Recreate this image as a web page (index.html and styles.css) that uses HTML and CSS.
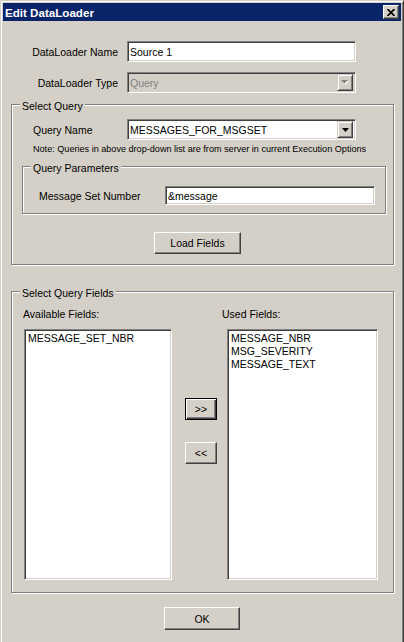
FILE: index.html
```html
<!DOCTYPE html>
<html lang="en">
<head>
    <meta charset="UTF-8">
    <meta name="viewport" content="width=device-width, initial-scale=1.0">
    <title>Edit DataLoader</title>
    <link rel="stylesheet" href="styles.css">
</head>
<body>
    <div class="window">
        <div class="titlebar">
            <span class="title">Edit DataLoader</span>
            <button class="close" title="Close">
                <svg width="8" height="7" viewBox="0 0 8 7">
                    <path d="M0.5 0 L7.5 7 M7.5 0 L0.5 7" stroke="#000" stroke-width="1.7" fill="none"/>
                </svg>
            </button>
        </div>

        <div class="content">
            <div class="row top-row">
                <label class="top-label" for="loaderName">DataLoader Name</label>
                <input type="text" class="field wide" id="loaderName" value="Source 1">
            </div>
            <div class="row top-row second">
                <label class="top-label">DataLoader Type</label>
                <div class="combo wide disabled">
                    <span>Query</span>
                    <span class="drop">
                        <svg width="8" height="5" viewBox="0 0 8 5">
                            <polygon points="1,1 8,1 4.5,4.5" fill="#fff"/>
                            <polygon points="0,0 7,0 3.5,3.5" fill="#808080"/>
                        </svg>
                    </span>
                </div>
            </div>

            <div class="group query-group">
                <div class="group-title">Select Query</div>
                <div class="row query-row">
                    <label class="query-label">Query Name</label>
                    <div class="combo wide">
                        <span>MESSAGES_FOR_MSGSET</span>
                        <span class="drop">
                            <svg width="7" height="4" viewBox="0 0 7 4">
                                <polygon points="0,0 7,0 3.5,4" fill="#000"/>
                            </svg>
                        </span>
                    </div>
                </div>
                <div class="note">Note: Queries in above drop-down list are from server in current Execution Options</div>

                <div class="group params-group">
                    <div class="group-title">Query Parameters</div>
                    <div class="row params-row">
                        <label class="param-label" for="msgSet">Message Set Number</label>
                        <input type="text" class="field param-field" id="msgSet" value="&amp;message">
                    </div>
                </div>

                <button class="btn load-btn">Load Fields</button>
            </div>

            <div class="group fields-group">
                <div class="group-title">Select Query Fields</div>
                <div class="fields-row">
                    <div class="field-col">
                        <div class="col-label">Available Fields:</div>
                        <div class="listbox available">
                            <div class="item">MESSAGE_SET_NBR</div>
                        </div>
                    </div>
                    <div class="move-col">
                        <button class="btn move-btn default">&gt;&gt;</button>
                        <button class="btn move-btn back">&lt;&lt;</button>
                    </div>
                    <div class="field-col used-col">
                        <div class="col-label">Used Fields:</div>
                        <div class="listbox used">
                            <div class="item">MESSAGE_NBR</div>
                            <div class="item">MSG_SEVERITY</div>
                            <div class="item">MESSAGE_TEXT</div>
                        </div>
                    </div>
                </div>
            </div>

            <button class="btn ok-btn">OK</button>
        </div>
    </div>
</body>
</html>
```

FILE: styles.css
```css
* {
    box-sizing: border-box;
}
body {
    margin: 0;
    font-family: "Liberation Sans", Arial, sans-serif;
    font-size: 10.5px;
    color: #000;
    background-color: #D4D0C8;
}
.window {
    width: 404px;
    height: 642px;
    padding: 2px 2px 0 2px;
    background-color: #D4D0C8; /* classic dialog gray */
    border: 1px solid;
    border-color: #D4D0C8 #404040 #404040 #D4D0C8;
    border-bottom: none;
    box-shadow: inset 1px 1px 0 #fff, inset -1px 0 0 #808080;
}
.titlebar {
    height: 18px;
    display: flex;
    align-items: center;
    justify-content: space-between;
    padding: 0 2px 0 2px;
    background-color: #0A246A; /* navy caption */
}
.title {
    color: #fff;
    font-weight: bold;
    font-size: 11.6px;
}
.close {
    width: 16px;
    height: 14px;
    padding: 0;
    display: flex;
    align-items: center;
    justify-content: center;
    background-color: #D4D0C8;
    border: 1px solid;
    border-color: #fff #404040 #404040 #fff;
    box-shadow: inset -1px -1px 0 #808080;
}

/* sunken white edit box */
.field,
.combo,
.listbox {
    border: 1px solid;
    border-color: #808080 #fff #fff #808080;
    box-shadow: inset 1px 1px 0 #404040, inset -1px -1px 0 #D4D0C8;
    background-color: #fff;
    font-family: inherit;
    font-size: 10.5px;
    color: #000;
}
.field {
    padding: 0 0 0 2px;
    outline: none;
}
.row {
    display: flex;
    align-items: center;
}
.content {
    padding: 0 6px 0 8px;
}
.top-row {
    margin-top: 20px;
}
.top-row.second {
    margin-top: 10px;
}
.top-label {
    width: 107px;
    margin-right: 9px;
    text-align: right;
}
.wide {
    width: 229px;
    height: 21px;
}
.combo {
    display: flex;
    align-items: center;
    justify-content: space-between;
    padding: 2px;
}
.combo.disabled {
    background-color: #D4D0C8;
    color: #808080;
}
.drop {
    width: 16px;
    height: 17px;
    display: flex;
    align-items: center;
    justify-content: center;
    background-color: #D4D0C8;
    border: 1px solid;
    border-color: #D4D0C8 #404040 #404040 #D4D0C8;
    box-shadow: inset 1px 1px 0 #fff, inset -1px -1px 0 #808080;
}

/* etched group frame */
.group {
    border: 1px solid #808080;
    box-shadow: inset 1px 1px 0 #fff, 1px 1px 0 #fff;
}
.group-title {
    width: max-content;
    margin: -5px 0 0 8px;
    padding: 0 2px;
    line-height: 13px;
    background-color: #D4D0C8;
}
.query-group {
    width: 383px;
    margin-top: 11px;
    padding-bottom: 10px;
}
.query-row {
    margin-top: 6px;
    padding-left: 21px;
}
.query-label {
    width: 94px;
}
.note {
    margin: 4px 0 0 21px;
    font-size: 9.1px;
    line-height: 11px;
    white-space: nowrap;
}
.params-group {
    width: 364px;
    margin: 11px 0 0 10px;
    padding-bottom: 8px;
}
.params-row {
    margin-top: 11px;
    padding-left: 16px;
}
.param-label {
    width: 126px;
}
.param-field {
    width: 210px;
    height: 19px;
}

/* raised push button */
.btn {
    display: block;
    height: 22px;
    padding: 0;
    font-family: inherit;
    font-size: 10.5px;
    color: #000;
    background-color: #D4D0C8;
    border: 1px solid;
    border-color: #fff #404040 #404040 #fff;
    box-shadow: inset -1px -1px 0 #808080;
}
.btn.default {
    border-color: #000;
    box-shadow: inset 1px 1px 0 #fff, inset -1px -1px 0 #404040, inset -2px -2px 0 #808080;
}
.load-btn {
    width: 87px;
    margin: 18px 0 0 142px;
}
.fields-group {
    width: 383px;
    margin-top: 26px;
    padding-bottom: 12px;
}
.fields-row {
    display: flex;
    margin-top: 8px;
    padding-left: 11px;
}
.col-label {
    line-height: 13px;
}
.listbox {
    height: 251px;
    margin-top: 8px;
    padding: 2px 3px;
}
.listbox .item {
    line-height: 13px;
    white-space: nowrap;
}
.available {
    width: 148px;
    margin-left: 1px;
}
.move-col {
    margin: 90px 0 0 13px;
}
.move-btn {
    width: 32px;
}
.move-btn.back {
    margin-top: 22px;
}
.used-col {
    margin-left: 5px;
}
.used {
    width: 151px;
    margin-left: 5px;
}
.ok-btn {
    width: 76px;
    height: 23px;
    margin: 14px 0 0 153px;
}
```
